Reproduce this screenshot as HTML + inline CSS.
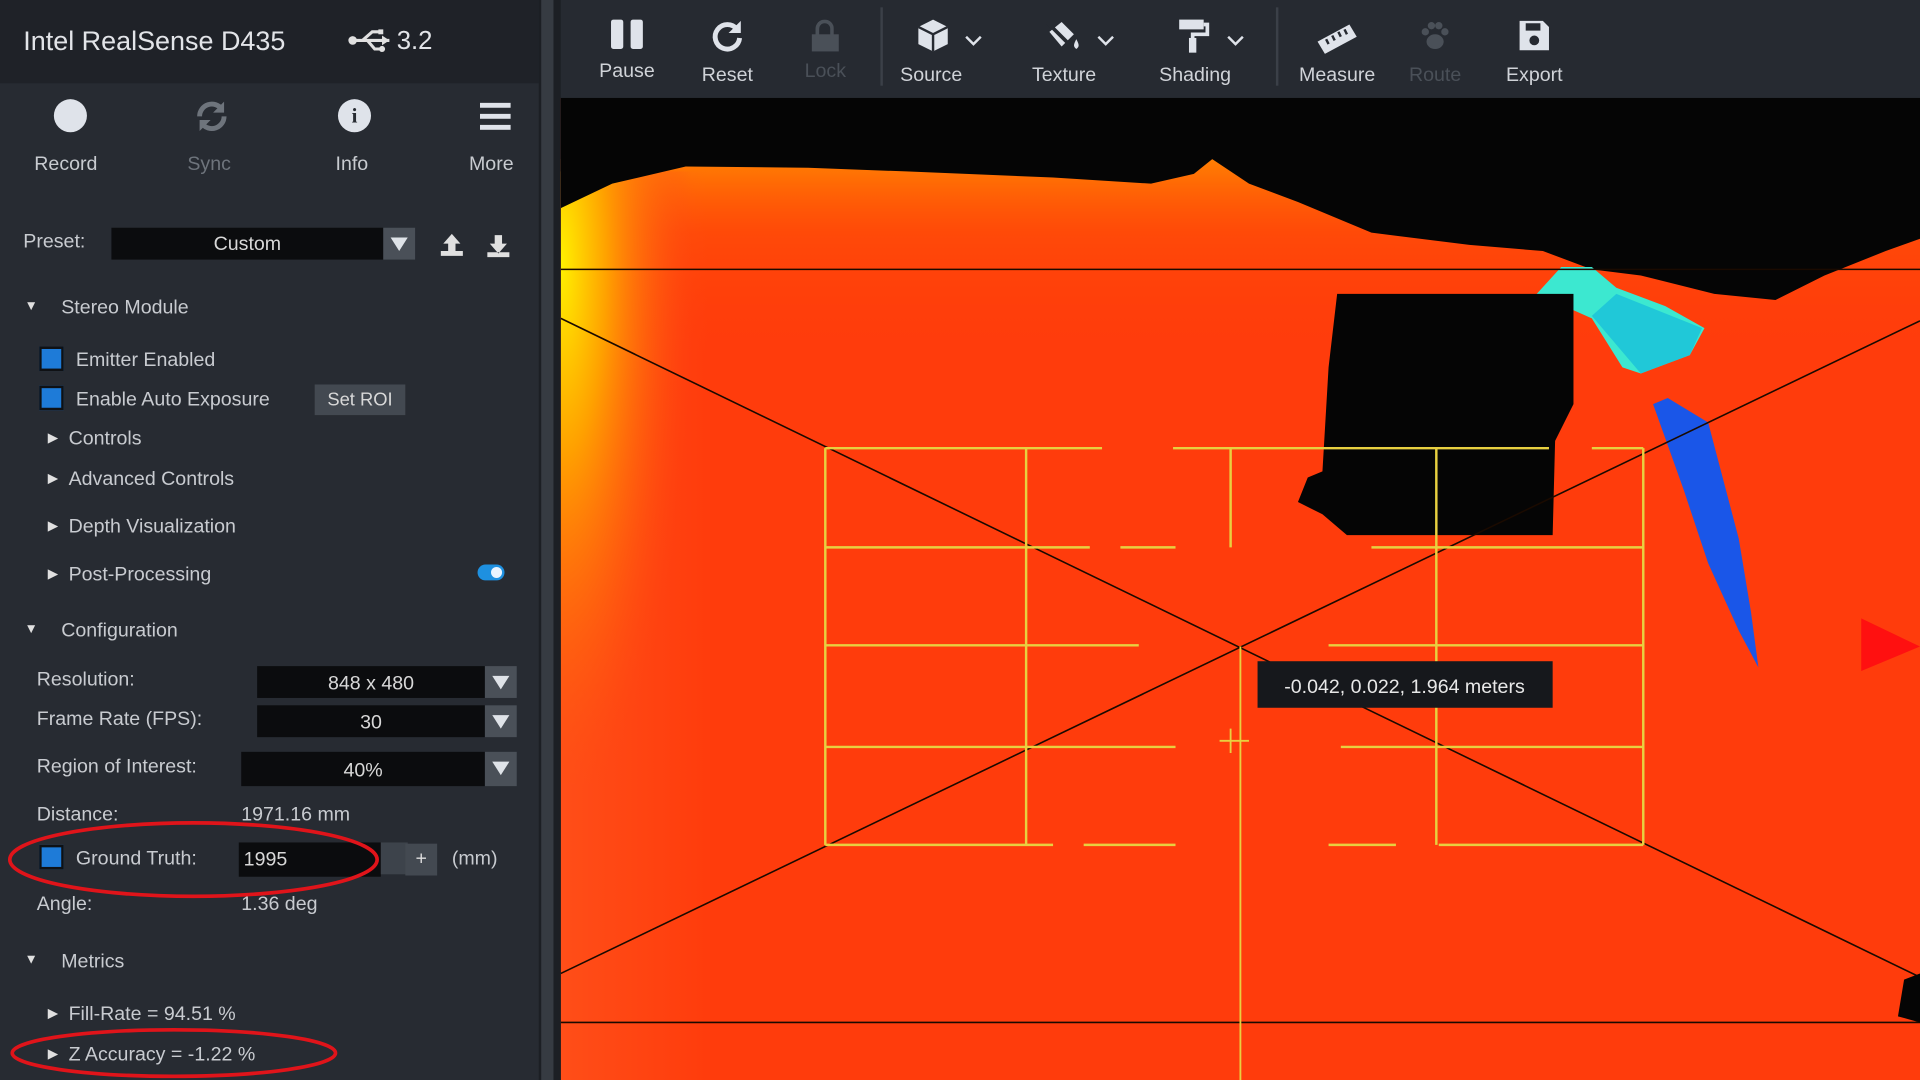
<!DOCTYPE html>
<html><head><meta charset="utf-8"><style>
*{margin:0;padding:0;box-sizing:border-box}
html,body{width:1920px;height:1080px;overflow:hidden;background:#262a31}
#w{position:absolute;left:0;top:0;width:1568px;height:882px;transform:scale(1.22449);transform-origin:0 0;font-family:"Liberation Sans",sans-serif;color:#c9ccd1}
.a{position:absolute;white-space:nowrap}
.sb{position:absolute;left:0;top:0;width:440px;height:882px;background:#272b32}
.hd{position:absolute;left:0;top:0;width:440px;height:68px;background:#1f2228}
.lbl{font-size:16px;color:#c8cbd0}
.box{position:absolute;background:#0b0c0e;color:#d8d8d8;font-size:16px;text-align:center}
.dd{position:absolute;background:#4a5058;width:26px}
.dd:after{content:"";position:absolute;left:6px;top:8px;border-left:7px solid transparent;border-right:7px solid transparent;border-top:11px solid #dfe3e8}
.cb{position:absolute;width:20px;height:20px;background:#1e7bd8;border:2px solid #0f1114}
.tri{font-size:11px;color:#e0e0e0}
.tb{position:absolute;top:0;height:80px;text-align:center;font-size:16px;color:#d0d3d8}
</style></head><body><div id="w">
<div class="sb"></div><div class="hd"></div>
<div class="a" style="left:19px;top:21px;font-size:22px;color:#e2e4e8">Intel RealSense D435</div>
<svg class="a" style="left:284px;top:22px" width="36" height="22" viewBox="0 0 36 22"><circle cx="4" cy="11" r="3.5" fill="#e0e0e0"/><path d="M4 11H34M12 11L20 4H26M16 11L22 18H27" stroke="#e0e0e0" stroke-width="2.5" fill="none"/><path d="M34 11l-6-4v8z" fill="#e0e0e0"/><rect x="25" y="2" width="4" height="4" fill="#e0e0e0"/><circle cx="28" cy="18" r="2.5" fill="#e0e0e0"/></svg>
<div class="a" style="left:324px;top:22px;font-size:21px;color:#e2e4e8">3.2</div>
<div class="a" style="left:44px;top:81px;width:27px;height:27px;border-radius:50%;background:#dfe3ea"></div>
<div class="a lbl" style="left:28px;top:126px">Record</div>
<svg class="a" style="left:158px;top:80px" width="30" height="30" viewBox="0 0 30 30"><path d="M5 15a10 10 0 0 1 18-6M25 15a10 10 0 0 1-18 6" stroke="#6e747c" stroke-width="4" fill="none"/><path d="M25 3v9h-9zM5 27v-9h9z" fill="#6e747c"/></svg>
<div class="a lbl" style="left:153px;top:126px;color:#6e747c">Sync</div>
<div class="a" style="left:276px;top:81px;width:27px;height:27px;border-radius:50%;background:#dfe3ea;color:#272b32;font:bold 17px 'Liberation Serif',serif;text-align:center;line-height:27px">i</div>
<div class="a lbl" style="left:274px;top:126px">Info</div>
<div class="a" style="left:392px;top:84px;width:25px;height:22px;border-top:4px solid #dfe3ea;border-bottom:4px solid #dfe3ea"><div style="margin-top:5px;height:4px;background:#dfe3ea"></div></div>
<div class="a lbl" style="left:383px;top:126px">More</div>
<div class="a lbl" style="left:19px;top:189px">Preset:</div>
<div class="box" style="left:91px;top:186px;width:222px;height:26px;line-height:28px">Custom</div>
<div class="dd" style="left:313px;top:186px;height:26px"></div>
<svg class="a" style="left:358px;top:189px" width="22" height="22" viewBox="0 0 22 22"><path d="M11 2l-7 8h4v6h6v-6h4z M2 16v4h18v-4" fill="#e0e0e0"/></svg>
<svg class="a" style="left:396px;top:190px" width="22" height="22" viewBox="0 0 22 22"><path d="M11 17l-7-8h4v-7h6v7h4z M2 16v4h18v-4" fill="#e0e0e0"/></svg>
<div class="a tri" style="left:20px;top:244px">▼</div><div class="a lbl" style="left:50px;top:243px">Stereo Module</div>
<div class="cb" style="left:32px;top:283px"></div><div class="a lbl" style="left:62px;top:286px">Emitter Enabled</div>
<div class="cb" style="left:32px;top:315px"></div><div class="a lbl" style="left:62px;top:318px">Enable Auto Exposure</div>
<div class="a" style="left:257px;top:314px;width:74px;height:25px;background:#434951;font-size:15px;text-align:center;line-height:26px;color:#d8d8d8">Set ROI</div>
<div class="a tri" style="left:39px;top:351px">▶</div><div class="a lbl" style="left:56px;top:350px">Controls</div>
<div class="a tri" style="left:39px;top:384px">▶</div><div class="a lbl" style="left:56px;top:383px">Advanced Controls</div>
<div class="a tri" style="left:39px;top:423px">▶</div><div class="a lbl" style="left:56px;top:422px">Depth Visualization</div>
<div class="a tri" style="left:39px;top:462px">▶</div><div class="a lbl" style="left:56px;top:461px">Post-Processing</div>
<div class="a" style="left:390px;top:461px;width:22px;height:13px;border-radius:7px;background:#1e90e0"><div style="position:absolute;right:2px;top:2px;width:9px;height:9px;border-radius:50%;background:#eaf4ff"></div></div>
<div class="a tri" style="left:20px;top:508px">▼</div><div class="a lbl" style="left:50px;top:507px">Configuration</div>
<div class="a lbl" style="left:30px;top:547px">Resolution:</div>
<div class="box" style="left:210px;top:544px;width:186px;height:26px;line-height:30px">848 x 480</div><div class="dd" style="left:396px;top:544px;height:26px"></div>
<div class="a lbl" style="left:30px;top:579px">Frame Rate (FPS):</div>
<div class="box" style="left:210px;top:576px;width:186px;height:26px;line-height:30px">30</div><div class="dd" style="left:396px;top:576px;height:26px"></div>
<div class="a lbl" style="left:30px;top:618px">Region of Interest:</div>
<div class="box" style="left:197px;top:614px;width:199px;height:28px;line-height:32px">40%</div><div class="dd" style="left:396px;top:614px;height:28px"></div>
<div class="a lbl" style="left:30px;top:657px">Distance:</div><div class="a lbl" style="left:197px;top:657px">1971.16 mm</div>
<div class="cb" style="left:32px;top:690px"></div><div class="a lbl" style="left:62px;top:693px">Ground Truth:</div>
<div class="box" style="left:195px;top:688px;width:116px;height:28px;line-height:30px;text-align:left;padding-left:4px">1995</div>
<div class="a" style="left:311px;top:688px;width:22px;height:26px;background:#3d434b"></div>
<div class="a" style="left:331px;top:689px;width:26px;height:26px;background:#434951;text-align:center;line-height:26px;color:#ddd">+</div>
<div class="a lbl" style="left:369px;top:693px">(mm)</div>
<div class="a lbl" style="left:30px;top:730px">Angle:</div><div class="a lbl" style="left:197px;top:730px">1.36 deg</div>
<div class="a tri" style="left:20px;top:778px">▼</div><div class="a lbl" style="left:50px;top:777px">Metrics</div>
<div class="a tri" style="left:39px;top:821px">▶</div><div class="a lbl" style="left:56px;top:820px">Fill-Rate = 94.51 %</div>
<div class="a tri" style="left:39px;top:854px">▶</div><div class="a lbl" style="left:56px;top:853px">Z Accuracy = -1.22 %</div>
<svg class="a" style="left:0;top:0" width="460" height="882"><ellipse cx="158" cy="702" rx="150" ry="30" stroke="#e0141a" stroke-width="3" fill="none"/><ellipse cx="142" cy="860" rx="132" ry="19" stroke="#e0141a" stroke-width="3" fill="none"/></svg>
<div class="a" style="left:440px;top:0;width:18px;height:882px;background:#1c1f24"></div>
<div class="a" style="left:442px;top:0;width:10px;height:882px;background:#363b42"></div>
<div class="a" style="left:458px;top:0;width:1110px;height:80px;background:#262a31"></div>
<div class="a" style="left:458px;top:80px;width:1110px;height:802px;background:#050505"></div>
<div class="a" style="left:719px;top:6px;width:2px;height:64px;background:#3b4048"></div>
<div class="a" style="left:1042px;top:6px;width:2px;height:64px;background:#3b4048"></div>
<div class="tb" style="left:482px;width:60px"><div style="margin:16px auto 0;width:26px;height:24px;display:flex;justify-content:space-between"><i style="width:10px;background:#dfe3ea;border-radius:2px"></i><i style="width:10px;background:#dfe3ea;border-radius:2px"></i></div><div style="margin-top:10px">Pause</div></div>
<div class="tb" style="left:564px;width:60px"><svg style="margin-top:14px" width="30" height="30" viewBox="0 0 30 30"><path d="M23 10A10 10 0 1 0 25 17" stroke="#dfe3ea" stroke-width="4" fill="none"/><path d="M26 3v10h-10z" fill="#dfe3ea"/></svg><div style="margin-top:4px">Reset</div></div>
<div class="tb" style="left:646px;width:56px;color:#4a5058"><div style="margin:16px auto 0;width:22px;height:26px;position:relative"><div style="position:absolute;bottom:0;width:22px;height:14px;background:#4a5058"></div><div style="position:absolute;top:0;left:3px;width:15px;height:15px;border:3px solid #4a5058;border-radius:8px 8px 0 0;border-bottom:none"></div></div><div style="margin-top:8px">Lock</div></div>
<div class="tb" style="left:730px;width:76px"><svg style="margin-top:14px;margin-left:-10px" width="34" height="30" viewBox="0 0 34 30"><path d="M4 8l12-6 12 6v14l-12 6-12-6z" fill="#dfe3ea"/><path d="M16 14v14M4 8l12 6 12-6" stroke="#262a31" stroke-width="2" fill="none"/></svg><svg class="a" style="left:58px;top:28px" width="14" height="10"><path d="M1 2l6 6 6-6" stroke="#dfe3ea" stroke-width="2" fill="none"/></svg><div style="margin-top:4px;margin-left:-15px">Source</div></div>
<div class="tb" style="left:836px;width:80px"><svg style="margin-top:14px;margin-left:-16px" width="34" height="30" viewBox="0 0 34 30"><path d="M6 12l10-8 10 10-10 10z" fill="#dfe3ea"/><path d="M4 4l18 18" stroke="#262a31" stroke-width="3"/><path d="M28 18c2 4 3 6 0 8-3-2-2-4 0-8z" fill="#dfe3ea"/></svg><svg class="a" style="left:60px;top:28px" width="14" height="10"><path d="M1 2l6 6 6-6" stroke="#dfe3ea" stroke-width="2" fill="none"/></svg><div style="margin-top:4px;margin-left:-14px">Texture</div></div>
<div class="tb" style="left:940px;width:84px"><svg style="margin-top:14px;margin-left:-16px" width="30" height="30" viewBox="0 0 30 30"><rect x="4" y="2" width="20" height="8" fill="#dfe3ea"/><path d="M24 6h3v8H15v4" stroke="#dfe3ea" stroke-width="3" fill="none"/><rect x="12" y="17" width="6" height="12" fill="#dfe3ea"/></svg><svg class="a" style="left:62px;top:28px" width="14" height="10"><path d="M1 2l6 6 6-6" stroke="#dfe3ea" stroke-width="2" fill="none"/></svg><div style="margin-top:4px;margin-left:-12px">Shading</div></div>
<div class="tb" style="left:1054px;width:76px"><svg style="margin-top:14px" width="36" height="30" viewBox="0 0 36 30"><path d="M2 20L28 6l6 10-26 14z" fill="#dfe3ea"/><path d="M9 18l2 4M14 15l2 4M19 12l2 4M24 10l2 4" stroke="#262a31" stroke-width="2"/></svg><div style="margin-top:4px">Measure</div></div>
<div class="tb" style="left:1146px;width:52px;color:#4a5058"><svg style="margin-top:14px" width="30" height="30" viewBox="0 0 30 30"><ellipse cx="15" cy="20" rx="7" ry="6" fill="#4a5058"/><circle cx="7" cy="12" r="3" fill="#4a5058"/><circle cx="12" cy="7" r="3" fill="#4a5058"/><circle cx="18" cy="7" r="3" fill="#4a5058"/><circle cx="23" cy="12" r="3" fill="#4a5058"/></svg><div style="margin-top:4px">Route</div></div>
<div class="tb" style="left:1222px;width:62px"><svg style="margin-top:14px" width="30" height="30" viewBox="0 0 30 30"><path d="M3 3h19l5 5v19H3z" fill="#dfe3ea"/><rect x="8" y="5" width="12" height="6" fill="#262a31"/><circle cx="15" cy="19" r="4" fill="#262a31"/></svg><div style="margin-top:4px">Export</div></div>
<svg class="a" style="left:458px;top:80px" width="1110" height="802" viewBox="458 80 1110 802">
<defs>
<linearGradient id="g2" x1="0" y1="0" x2="0" y2="1"><stop offset="0" stop-color="#ff9000" stop-opacity="0.8"/><stop offset="0.15" stop-color="#ff6a00" stop-opacity="0.3"/><stop offset="0.4" stop-color="#ff4000" stop-opacity="0"/></linearGradient>
<radialGradient id="g4" cx="0" cy="0.15" r="0.9" fx="0" fy="0.15"><stop offset="0" stop-color="#fff000"/><stop offset="0.35" stop-color="#ffa000"/><stop offset="1" stop-color="#ff4a10" stop-opacity="0"/></radialGradient>
<linearGradient id="g5" x1="0" y1="0" x2="1" y2="0"><stop offset="0" stop-color="#ff5a20" stop-opacity="0.6"/><stop offset="1" stop-color="#ff5a20" stop-opacity="0"/></linearGradient>
</defs>
<rect x="458" y="80" width="1110" height="802" fill="#ff3c0c"/>
<rect x="458" y="130" width="1110" height="400" fill="url(#g2)"/>
<rect x="458" y="140" width="120" height="742" fill="url(#g5)"/>
<rect x="458" y="140" width="120" height="500" fill="url(#g4)"/>
<path d="M458 80H1568V195L1540 205 1490 225 1450 245 1400 240 1340 225 1300 220 1260 205 1200 200 1120 190 1060 165 1020 150 990 130 975 142 940 150 860 145 740 140 660 137 560 136 500 150 458 170z" fill="#050505"/>
<path d="M1255 240L1275 218 1300 218 1320 235 1360 250 1392 268 1380 290 1340 305 1325 300 1300 260z" fill="#3ce8d0"/>
<path d="M1300 258L1320 240 1390 268 1380 290 1340 305z" fill="#20c8d8"/>
<path d="M1350 330L1362 325 1395 345 1420 440 1430 500 1436 545 1420 515 1395 460 1375 400z" fill="#1a56e8"/>
<path d="M1092 240H1285V330L1270 360 1268 437H1100L1080 420 1060 410 1068 390 1080 385 1085 300z" fill="#050505"/>
<g stroke="#1a0a00" stroke-width="1.3"><line x1="458" y1="220" x2="1568" y2="220"/><line x1="458" y1="835" x2="1568" y2="835"/><line x1="458" y1="260" x2="1568" y2="798"/><line x1="458" y1="795" x2="1568" y2="262"/></g>
<g stroke="#e8d040" stroke-width="2" fill="none">
<path d="M674 366H900M958 366H1265M1300 366H1342"/>
<path d="M674 447H890M915 447H960M1120 447H1342"/>
<path d="M674 527H930M1085 527H1342"/>
<path d="M674 610H960M1095 610H1342"/>
<path d="M674 690H860M885 690H960M1085 690H1140M1175 690H1342"/>
<path d="M674 366V690M838 366V690M1005 366V447M1173 366V690M1342 366V690"/>
<path d="M1013 528V882M1005 595V615M996 605H1020" stroke-width="1.5"/>
</g>
<path d="M1520 505L1568 528 1520 548z" fill="#ff1010"/>
<path d="M1555 800L1568 795V835L1550 830z" fill="#050505"/>
<rect x="1027" y="540" width="241" height="38" fill="#16181c"/>
<text x="1147" y="566" fill="#e8e8e8" font-size="16" font-family="Liberation Sans" text-anchor="middle">-0.042, 0.022, 1.964 meters</text>
</svg>
</div></body></html>
